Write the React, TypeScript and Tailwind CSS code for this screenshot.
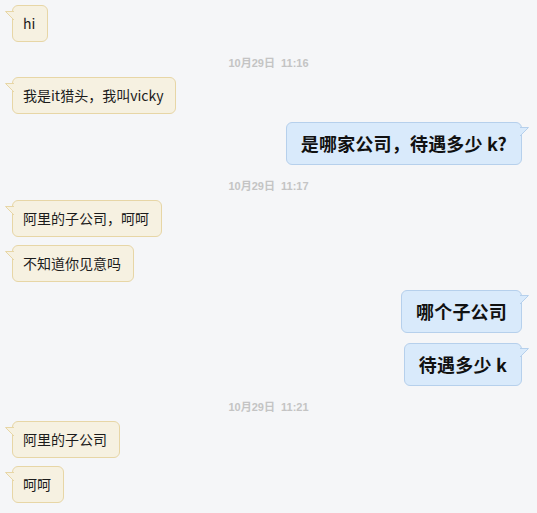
import React from "react";

type Msg =
  | { kind: "time"; text: string }
  | { kind: "in"; text: string }
  | { kind: "out"; text: string };

const messages: Msg[] = [
  { kind: "in", text: "hi" },
  { kind: "time", text: "10月29日  11:16" },
  { kind: "in", text: "我是it猎头，我叫vicky" },
  { kind: "out", text: "是哪家公司，待遇多少 k?" },
  { kind: "time", text: "10月29日  11:17" },
  { kind: "in", text: "阿里的子公司，呵呵" },
  { kind: "in", text: "不知道你见意吗" },
  { kind: "out", text: "哪个子公司" },
  { kind: "out", text: "待遇多少 k" },
  { kind: "time", text: "10月29日  11:21" },
  { kind: "in", text: "阿里的子公司" },
  { kind: "in", text: "呵呵" },
];

const font = { fontFamily: '"Noto Sans CJK SC", "Liberation Sans", sans-serif' };

function Incoming({ text }: { text: string }) {
  return (
    <div className="flex pl-3">
      <div className="relative rounded-md border border-[#e7d6a6] bg-[#f6f1e1] pl-[10px] pr-3 py-[8px] text-[14px] leading-[19px] text-[#1c1c1c]">
        <svg className="absolute left-[-8px] top-[5px]" width="9" height="10" viewBox="0 0 9 10">
          <path d="M9 0.5 L0.5 0.5 L9 9 Z" fill="#f6f1e1" />
          <path d="M9 0.5 L0.5 0.5 L9 9" fill="none" stroke="#e7d6a6" strokeWidth="1" />
        </svg>
        {text}
      </div>
    </div>
  );
}

function Outgoing({ text }: { text: string }) {
  return (
    <div className="flex justify-end pr-[15px]">
      <div className="relative rounded-md border border-[#b6d0ec] bg-[#d9eafb] px-[14px] py-[10px] text-[18px] font-bold leading-[21px] tracking-[0.2px] text-[#111]">
        <svg className="absolute right-[-8px] top-[4px]" width="9" height="10" viewBox="0 0 9 10">
          <path d="M0 0.5 L8.5 0.5 L0 9 Z" fill="#d9eafb" />
          <path d="M0 0.5 L8.5 0.5 L0 9" fill="none" stroke="#b6d0ec" strokeWidth="1" />
        </svg>
        {text}
      </div>
    </div>
  );
}

function TimeLabel({ text }: { text: string }) {
  return (
    <div
      className="mt-[6px] mb-[-1px] text-center text-[11px] font-bold leading-[14px] whitespace-pre text-[#c4c4c4]"
      style={{ fontFamily: '"Liberation Sans", "Noto Sans CJK SC", sans-serif' }}
    >
      {text}
    </div>
  );
}

export default function App() {
  return (
    <div className="min-h-[513px] w-[537px] bg-[#f5f6f8] pt-[5px]" style={font}>
      <div className="flex flex-col gap-2">
        {messages.map((m, i) => {
          if (m.kind === "time") return <TimeLabel key={i} text={m.text} />;
          if (m.kind === "in") return <Incoming key={i} text={m.text} />;
          return (
            <div key={i} className={i === 8 ? "mt-[2px]" : ""}>
              <Outgoing text={m.text} />
            </div>
          );
        })}
      </div>
    </div>
  );
}
